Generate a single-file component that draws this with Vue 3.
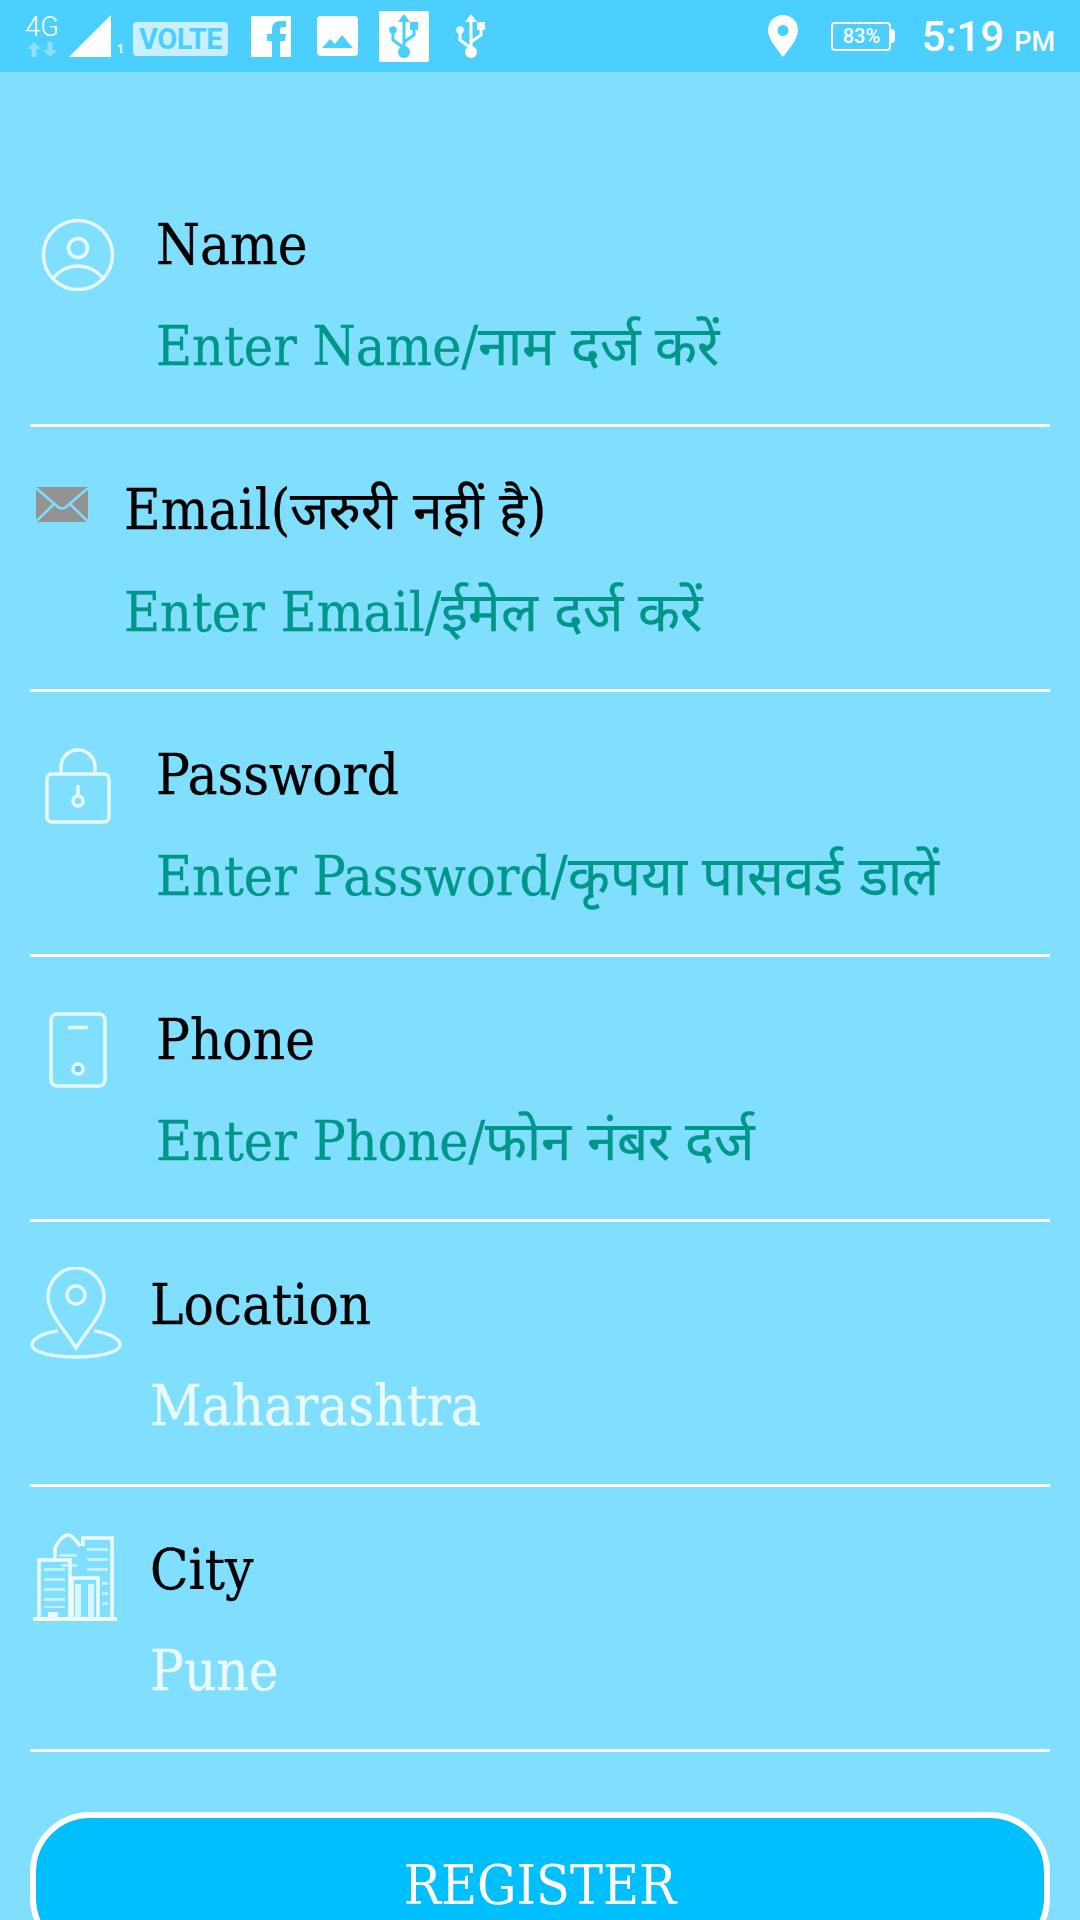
<script setup>
const rows = [
  { id: 'name', label: 'Name', labelHi: '', labelEnd: '', value: 'Enter Name/', valueHi: 'नाम दर्ज करें', inset: 'wide', filled: false },
  { id: 'email', label: 'Email(', labelHi: 'जरुरी नहीं है', labelEnd: ')', value: 'Enter Email/', valueHi: 'ईमेल दर्ज करें', inset: 'narrow', filled: false },
  { id: 'lock', label: 'Password', labelHi: '', labelEnd: '', value: 'Enter Password/', valueHi: 'कृपया पासवर्ड डालें', inset: 'wide', filled: false },
  { id: 'phone', label: 'Phone', labelHi: '', labelEnd: '', value: 'Enter Phone/', valueHi: 'फोन नंबर दर्ज', inset: 'wide', filled: false },
  { id: 'pin', label: 'Location', labelHi: '', labelEnd: '', value: 'Maharashtra', valueHi: '', inset: 'mid', filled: true },
  { id: 'city', label: 'City', labelHi: '', labelEnd: '', value: 'Pune', valueHi: '', inset: 'mid', filled: true },
]
</script>

<template>
  <div class="screen">
    <header class="status">
      <div class="status-left">
        <div class="net"><span class="net-4g">4G</span>
          <svg class="net-arrows" width="30" height="15" viewBox="0 0 30 15"><path d="M7 0l7 7H9.500v8h-5V7H0zM23 15l7-7h-4.500V0h-5v8H16z" fill="#fff" opacity=".35"/></svg>
        </div>
        <svg class="signal" width="42" height="42" viewBox="0 0 42 42"><path d="M42 0v42H0z" fill="#fff"/></svg>
        <span class="sim">1</span>
        <span class="volte">VOLTE</span>
        <svg class="s-fb" width="40" height="41" viewBox="0 0 40 41"><path fill="#fff" d="M0 0h40v41H29V25h5l1-7h-6v-4c0-2 1-3 3-3h3V5h-5c-6 0-9 3-9 8v5h-5v7h5v16H0z"/></svg>
        <svg class="s-img" width="41" height="40" viewBox="0 0 41 40"><rect width="41" height="40" rx="4" fill="#fff"/><path d="M5 32l8-9 5 5 7-9 11 13z" fill="#4bcfff"/></svg>
        <div class="s-usb-box">
          <svg width="30" height="45" viewBox="0 0 30 45"><g fill="none" stroke="#4bcfff" stroke-width="3"><path d="M15 7v32M15 34L4 26v-7M15 28l10-7v-7"/></g><path d="M15 0l6 8H9z" fill="#4bcfff"/><circle cx="15" cy="38" r="6" fill="#4bcfff"/><circle cx="4" cy="16" r="3.800" fill="#4bcfff"/><rect x="21" y="8" width="8" height="8" fill="#4bcfff"/></svg>
        </div>
        <svg class="s-usb" width="30" height="45" viewBox="0 0 30 45"><g fill="none" stroke="#fff" stroke-width="3"><path d="M15 7v32M15 34L4 26v-7M15 28l10-7v-7"/></g><path d="M15 0l6 8H9z" fill="#fff"/><circle cx="15" cy="38" r="6" fill="#fff"/><circle cx="4" cy="16" r="3.800" fill="#fff"/><rect x="21" y="8" width="8" height="8" fill="#fff"/></svg>
      </div>
      <div class="status-right">
        <svg width="30" height="42" viewBox="0 0 30 42"><path fill-rule="evenodd" fill="#fff" d="M15 0c8 0 15 6.500 15 15 0 9-9 19-15 27C9 34 0 24 0 15 0 6.500 7 0 15 0zm0 10a5.500 5.500 0 100 11 5.500 5.500 0 000-11z"/></svg>
        <div class="battery"><span class="batt-body">83%</span><span class="batt-cap"></span></div>
        <div class="clock">5:19<small>PM</small></div>
      </div>
    </header>

    <main class="form">
      <section v-for="r in rows" :key="r.id" class="row" :class="[r.inset, r.id]">
        <div class="icon">
          <svg v-if="r.id === 'name'" width="74" height="74" viewBox="0 0 74 74" fill="none" stroke="#e6f9ff" stroke-width="3.500"><circle cx="37" cy="37" r="34.500"/><circle cx="37" cy="30" r="9.500"/><path d="M12 60c7-8 15-12 25-12s18 4 25 12"/></svg>
          <svg v-else-if="r.id === 'email'" width="52" height="35" viewBox="0 0 52 35"><rect width="52" height="35" fill="#939393"/><path d="M0 1l22 19c2 2 6 2 8 0L52 1M0 34.500L18 17M52 34.500L34 17" fill="none" stroke="#7fdfff" stroke-width="2.500"/></svg>
          <svg v-else-if="r.id === 'lock'" width="66" height="76" viewBox="0 0 66 76" fill="none" stroke="#e6f9ff" stroke-width="3.500"><rect x="2" y="26" width="62" height="48" rx="5"/><path d="M16 26V19C16 9 24 2 33 2s17 7 17 17v7"/><circle cx="33" cy="53" r="5"/><path d="M33 48V37"/></svg>
          <svg v-else-if="r.id === 'phone'" width="58" height="76" viewBox="0 0 58 76" fill="none" stroke="#e6f9ff" stroke-width="3.500"><rect x="2" y="2" width="54" height="72" rx="6"/><path d="M19 15.500h20"/><circle cx="29" cy="57" r="5" fill="#6cc9ea"/></svg>
          <svg v-else-if="r.id === 'pin'" class="soft" width="92" height="92" viewBox="0 0 92 92" fill="none" stroke="#e0f8ff" stroke-width="3.500"><path d="M46 81C34 62 18 46 18 30a28 29 0 0156 0c0 16-16 32-28 51z"/><circle cx="46" cy="28" r="9"/><path d="M28 64C12 66 2 72 2 78c0 7 20 12 44 12s44-5 44-12c0-6-10-12-26-14"/></svg>
          <svg v-else class="soft" width="86" height="92" viewBox="0 0 86 92" fill="#eefbff" stroke="none">
            <g fill="none" stroke="#eefbff" stroke-width="3.500"><path d="M6 87V28h31v59M22 26V16c3-7 9-13 13-13s8 5 12 11M50 14V6h29v81M39 87V46h26v41"/><path d="M45 52v33M58 52v33" stroke-width="6" opacity=".8"/></g>
            <path d="M0 85h84v4H0zM15 80h10v6H15z"/>
            <g opacity=".6"><path d="M11 36h21v3H11zM11 46h21v3H11zM11 56h21v3H11zM11 66h21v3H11zM11 74h21v2H11zM54 16h21v3H54zM54 26h21v3H54zM54 36h21v3H54zM69 50h6v3h-6zM69 60h6v3h-6zM69 70h6v3h-6zM26 22h18v3H26zM28 32h16v3H28z"/></g>
          </svg>
        </div>
        <div class="field">
          <div class="label">{{ r.label }}<span v-if="r.labelHi" class="hi">{{ r.labelHi }}</span>{{ r.labelEnd }}</div>
          <div class="value" :class="{ filled: r.filled }">{{ r.value }}<span v-if="r.valueHi" class="hi">{{ r.valueHi }}</span></div>
        </div>
      </section>
    </main>

    <button class="register">REGISTER</button>
  </div>
</template>

<style>
html, body { margin: 0; padding: 0; }
</style>

<style scoped>
.screen {
  width: 1080px;
  height: 1920px;
  overflow: hidden;
  background: #80deff;
  font-family: "DejaVu Serif Condensed", "DejaVu Serif", serif;
}
.status {
  height: 72px;
  background: #4bcfff;
  display: flex;
  align-items: center;
  justify-content: space-between;
  padding: 0 25px 0 24px;
  box-sizing: border-box;
  color: #fff;
  font-family: Roboto, sans-serif;
}
.status-left { display: flex; align-items: center; }
.status-right { display: flex; align-items: center; }
.net { width: 36px; display: flex; flex-direction: column; align-items: center; margin-right: 9px; }
.net-4g { font-size: 27px; line-height: 24px; font-weight: 300; margin-bottom: 3px; }
.sim { width: 6px; font-size: 12px; font-weight: 700; align-self: flex-end; margin: 0 10px 6px 6px; line-height: 14px; }
.volte {
  width: 95px;
  height: 34px;
  margin-top: 6px;
  background: #c9f0ff;
  color: #4bcfff;
  font-size: 29px;
  font-weight: 700;
  line-height: 34px;
  letter-spacing: -0.5px;
  text-align: center;
  border-radius: 4px;
}
.s-fb { margin-left: 23px; }
.s-img { margin-left: 26px; }
.s-usb-box { margin-left: 21px; width: 50px; height: 51px; background: #fff; border-radius: 2px; display: flex; align-items: center; justify-content: center; }
.s-usb { margin-left: 27px; }
.battery { display: flex; align-items: center; margin-left: 33px; }
.batt-body { width: 56px; height: 25px; border: 2px solid #fff; border-radius: 4px; text-align: center; font-size: 20px; font-weight: 500; line-height: 25px; }
.batt-cap { width: 4px; height: 14px; background: #fff; border-radius: 0 4px 4px 0; }
.clock { margin-left: 26px; font-size: 42px; font-weight: 500; display: flex; align-items: baseline; }
.clock small { font-size: 27px; margin-left: 10px; font-weight: 500; }
.form { padding: 90px 30px 0; }
.row {
  height: 265px;
  box-sizing: border-box;
  border-bottom: 3px solid #fff;
  display: flex;
  align-items: flex-start;
}
.icon { display: flex; justify-content: center; flex: none; }
.soft { filter: blur(0.7px); }
.wide .icon { width: 95px; padding-top: 56px; margin-right: 31px; }
.phone .icon { padding-top: 55px; }
.narrow .icon { width: 64px; padding-top: 60px; margin-right: 30px; }
.mid .icon { width: 92px; padding-top: 45px; margin-right: 28px; }
.label { font-size: 56px; line-height: 60px; color: #000; margin-top: 53px; -webkit-text-stroke: 0.3px currentColor; }
.label .hi { font-size: 53px; }
.value { font-size: 55px; line-height: 60px; color: #009688; margin-top: 41px; -webkit-text-stroke: 0.3px currentColor; }
.value .hi { font-size: 54.500px; }
.value.filled { color: #e9fbff; font-size: 56px; }
.register {
  display: block;
  width: 1020px;
  height: 146px;
  margin: 60px 30px 0;
  box-sizing: border-box;
  border: 6px solid #fff;
  border-radius: 60px;
  background: #00bfff;
  color: #fff;
  font-family: inherit;
  font-size: 55px;
  padding: 0;
}
</style>
